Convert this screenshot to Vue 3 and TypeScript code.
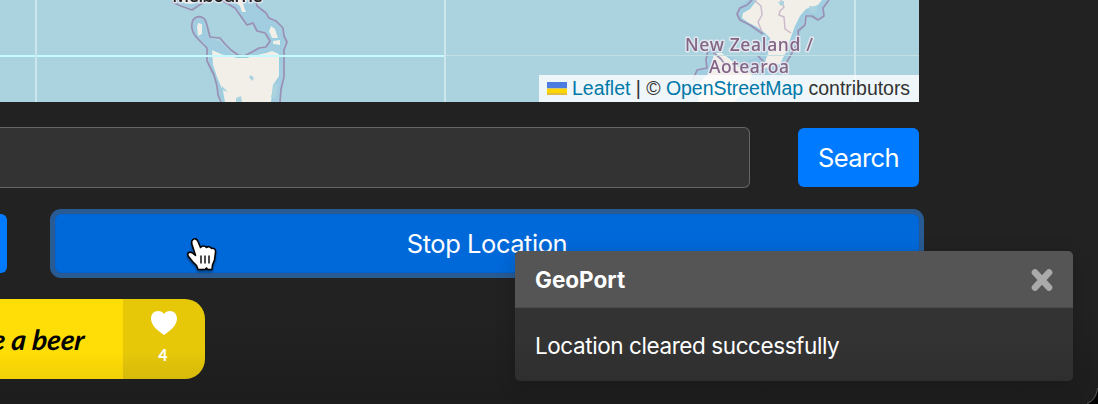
<script setup lang="ts">
import { ref } from 'vue'

const query = ref('')
const toastOpen = ref(true)
const supporters = 4
</script>

<template>
  <div class="window">
    <section class="map">
      <svg class="tiles" width="919" height="102" viewBox="0 0 919 102">
        <g class="coast">
          <path d="M170 0H174L183 5 192 9 203 0H222L236 10 247 25 254 24 258 32 265 33 270 39 266 45 269 49 263 47 254 50 243 57 232 54 220 42 210 38 201 37 206 46 209 56 208 66 215 80 217 92 222 102H280L283 86 284 50 287 42 284 31 276 22 267 17 257 4 258 0Z" class="shelf" />
          <path d="M195 18C191 24 191 34 195 38L203 42 209 37 207 24C205 15 199 15 195 18Z" class="shelf" />
          <path d="M172 2 181 6 192 10 204 2M223 1 235 8 247 25 253 23 257 31 265 33 270 41 266 47 259 48 252 52 244 56 238 55 231 50 225 44 220 38 210 37 207 25C205 15 197 15 193 20C190 27 193 34 198 39L207 48 207 61 214 75 217 86 218 95 221 102M256 0 257 6 266 13 269 18 276 21 283 28 284 36 287 42 284 50 284 77 281 89 280 102" class="border" />
          <path d="M212 50 221 54 229 56 237 58 247 58 257 55 266 53 272 51 279 54 279 76 273 85 271 102H225L223 91 217 77 213 65Z" class="land" />
          <path d="M233 0H248L243 4 246 12 242 12 240 6ZM198 23 202 24 202 34 198 36 197 27ZM271 26 275 29 278 38 272 38 269 31ZM273 41 280 40 280 45 273 44Z" class="land" />
          <path d="M180 0H200L192 4 184 3Z" class="land" />
          <path d="M249 77 251 75 254 78 252 81ZM222 86 228 92 222 90ZM236 98 241 96 242 102H236ZM275 83 278 85 276 98 271 97Z" class="water" />
        </g>
        <g class="coast">
          <path d="M748 0 738 8 737 16 742 22 752 28 759 33 765 38 763 48 758 58 740 62 722 52 709 50 707 66 696 71 693 82 693 102H755L771 76 784 62 793 44 802 30 804 16 815 20 823 15 822 8 829 0Z" class="shelf" />
          <path d="M757 0 750 9 743 13 742 18 749 23 757 27 765 33 770 38 769 50 765 62 758 70 780 64 786 52 790 40 795 26 800 16 806 9 818 5 822 0Z" class="land" />
          <path d="M714 53 722 53 731 60 740 68 752 74 748 88 734 102H698L700 82 710 72Z" class="land" />
          <path d="M754 0 761 6 762 15 758 22 762 32M781 0 784 7 780 11 779 15 784 17 785 29 791 33" class="region" />
          <path d="M752 0 747 5 740 8 737 14 740 20 750 25 757 30 763 34M829 0 823 8 824 16 818 20 812 16 806 16 805 25 798 31 799 41 792 53 785 65M708 50 706 60 707 68 697 70 693 80M713 52 721 59 726 66M758 56 764 62" class="border" />
          <path d="M778 2 784 1 784 4 781 6ZM809 6 818 7 816 13 810 13Z" class="water" />
        </g>
        <g fill="none">
          <path d="M0 56H445" class="grid-bright" />
          <path d="M445 55.5H919" class="grid-faint" />
          <path d="M36 0V102M445 0V102M855 0V102" class="grid-line" />
        </g>
        <text x="172" y="2" textLength="91" class="city">Melbourne</text>
        <text x="685" y="51" textLength="128" class="country">New Zealand /</text>
        <text x="709" y="73" textLength="80" class="country">Aotearoa</text>
      </svg>
      <div class="attribution">
        <svg class="flag" width="20" height="13" viewBox="0 0 20 13">
          <path d="M0 0H20V6.5H0Z" fill="#4c7be1" />
          <path d="M0 6.5H20V13H0Z" fill="#ffd500" />
          <path d="M0 11H20V13H0Z" fill="#e0bc45" />
        </svg>
        <span><a>Leaflet</a> | © <a>OpenStreetMap</a> contributors</span>
      </div>
    </section>

    <div class="search-row">
      <input v-model="query" class="field" type="text" />
      <button class="btn search">Search</button>
    </div>

    <div class="actions">
      <button class="btn previous"></button>
      <button class="btn stop"><span>Stop Location</span></button>
    </div>

    <div class="support">
      <div class="support-label"><span>e a beer</span></div>
      <div class="support-count">
        <svg width="26" height="24" viewBox="0 0 26 24"><path d="M13 24C9 21 0 15.500 0 7.500C0 3 3 0 7 0C9.500 0 12 1 13 3C14 1 16.500 0 19 0C23 0 26 3 26 7.500C26 15.500 17 21 13 24Z" fill="#fff" /></svg>
        <span>{{ supporters }}</span>
      </div>
    </div>

    <aside v-if="toastOpen" class="toast">
      <header>
        <strong>GeoPort</strong>
        <button class="close" @click="toastOpen = false">
          <svg width="22" height="24" viewBox="0 0 22 24"><path d="M4 4.500 18 19.500M18 4.500 4 19.500" fill="none" stroke="#aaa" stroke-width="6.600" stroke-linecap="round" /></svg>
        </button>
      </header>
      <p><span>Location cleared successfully</span></p>
    </aside>

    <svg class="pointer" width="34" height="38" viewBox="0 0 34 38">
      <path d="M6.500 3C8 1 11 1.500 12 4.500L14.500 10.500C16 8.500 19 8.500 20.500 10.500C22 9 24.500 9.500 25.500 11.500C28 10.500 30 12.500 29.500 15.500L28.500 23 26.500 28 26 32.500H21.500L20.500 31 19 32.500H12L10.500 28.500 6.500 24.500 2.500 19.500C.5 16.500 3 14 6 15.700L9.500 18.500 6 7.500C5.500 5.500 5.500 4 6.500 3Z" fill="#fff" stroke="#000" stroke-width="1.600" stroke-linejoin="round" />
      <path d="M15 18.500V26.500M19 18.500V26.500M23 18.500V26.500" stroke="#000" stroke-width="1.400" />
    </svg>
    <svg class="corner" width="14" height="20" viewBox="0 0 14 20"><path d="M14 5C13 13 9 18 4 20H14Z" fill="#000" /><path d="M13.500 4C12.500 12 9 17 3 19.500" fill="none" stroke="#555" /></svg>
  </div>
</template>

<style>
body { margin: 0; background: #222; }
</style>

<style scoped>
.window {
  position: relative;
  width: 1098px;
  height: 404px;
  overflow: hidden;
  background: linear-gradient(#222 76%, #1d1d1d 100%);
  color: #fff;
  font-family: Inter, "Liberation Sans", sans-serif;
}
.map {
  display: flex;
  align-items: flex-end;
  justify-content: flex-end;
  position: relative;
  width: 919px;
  height: 102px;
  background: #aad3df;
}
.tiles { position: absolute; left: 0; top: 0; overflow: hidden; }
.coast { filter: blur(0.6px); }
.shelf { fill: #a2cce0; }
.land { fill: #f2efe9; stroke: #93cfe0; stroke-width: 1.5; paint-order: stroke; }
.border { fill: none; stroke: #9a90b4; stroke-width: 1.7; stroke-linejoin: round; }
.region { fill: none; stroke: #cbbacb; stroke-width: 1.5; stroke-linejoin: round; }
.water { fill: #aad3df; }
.grid-bright { stroke: #c5fbff; stroke-width: 2; }
.grid-faint { stroke: #c2dfe3; stroke-width: 1; }
.grid-line { stroke: #cce6ed; stroke-width: 2; }
.city, .country { font-family: "Noto Sans", sans-serif; paint-order: stroke; stroke: rgba(242, 236, 242, 0.75); stroke-width: 3px; stroke-linejoin: round; }
.city { fill: #222; font-size: 19px; font-weight: 500; filter: blur(0.4px); }
.country { fill: #826485; font-size: 17.5px; font-weight: 500; filter: blur(0.4px); }
.attribution {
  position: relative;
  box-sizing: border-box;
  display: flex;
  align-items: center;
  gap: 5px;
  width: 380px;
  height: 27px;
  padding: 0 8px;
  background: rgba(255, 255, 255, 0.8);
  color: #333;
  font: 19.5px/27px "Liberation Sans", Arial, sans-serif;
  letter-spacing: -0.03px;
  white-space: nowrap;
}
.attribution a { color: #0078a8; }
.flag { flex: none; }
.search-row { display: flex; gap: 48px; width: 919px; height: 61px; margin-top: 25px; align-items: center; }
.field {
  box-sizing: border-box;
  flex: 1;
  height: 61px;
  border: 1px solid #666;
  border-left: 0;
  border-radius: 0 6px 6px 0;
  background: #333;
  color: #fff;
  outline: none;
}
.btn {
  box-sizing: border-box;
  height: 59px;
  padding: 0;
  border: 0;
  border-radius: 6px;
  background: #007bff;
  color: #fff;
  font: 25.5px/59px Inter, sans-serif;
}
.search { width: 121px; letter-spacing: -0.6px; }
.actions { display: flex; gap: 48px; width: 919px; margin-top: 26px; }
.previous { width: 7px; border-radius: 0 6px 6px 0; }
.stop { flex: 1; background: #0069d9; border: 1px solid #0062cc; line-height: 57px; box-shadow: 0 0 0 5px #285b94; letter-spacing: -0.45px; }
.support { display: flex; width: 205px; height: 80px; margin-top: 26px; border-radius: 0 20px 20px 0; overflow: hidden; }
.support-label {
  display: flex;
  align-items: center;
  justify-content: flex-end;
  box-sizing: border-box;
  width: 123px;
  padding-right: 38px;
  background: linear-gradient(#ffdd06 65%, #f1d007);
  color: #000;
  font: italic 700 28px/80px Lato, cursive;
  white-space: nowrap;
}
.support-label span { transform: skewX(-5deg); }
.support-count {
  display: flex;
  flex: 1;
  flex-direction: column;
  align-items: center;
  box-sizing: border-box;
  padding-top: 12px;
  background: linear-gradient(#e6c809 65%, #d7b90b);
  font: 900 16px/20px Lato, sans-serif;
}
.support-count span { margin-top: 10px; margin-right: 2px; }
.toast {
  position: absolute;
  left: 515px;
  top: 251px;
  width: 558px;
  height: 130px;
  border-radius: 5px;
  background: linear-gradient(#333 70%, #2e2e2e);
  box-shadow: 0 5px 20px rgba(0, 0, 0, 0.18);
}
.toast header {
  display: flex;
  align-items: center;
  justify-content: space-between;
  box-sizing: border-box;
  height: 57px;
  padding: 1px 20px 0;
  border-bottom: 1px solid #4a4a4a;
  border-radius: 5px 5px 0 0;
  background: #555;
}
.toast strong { font-size: 22.5px; font-weight: 700; line-height: 30px; padding-top: 1px; }
.close { display: flex; padding: 0; border: 0; background: none; }
.toast p { margin: 23px 20px 0; font-size: 22.5px; line-height: 30px; letter-spacing: -0.42px; white-space: nowrap; }
.pointer { position: absolute; left: 186px; top: 237px; filter: drop-shadow(0 2px 1px rgba(0, 0, 0, 0.4)); }
.corner { position: absolute; right: 0; bottom: 0; }
</style>
